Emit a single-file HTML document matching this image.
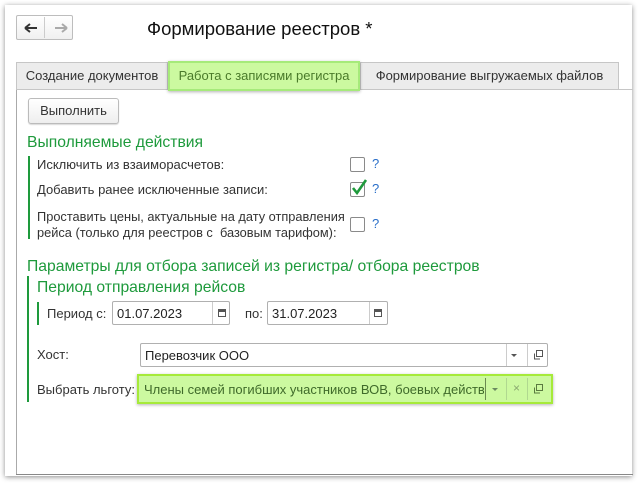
<!DOCTYPE html>
<html><head><meta charset="utf-8"><style>
*{box-sizing:border-box;margin:0;padding:0}
body{width:639px;height:483px;background:#fff;position:relative;overflow:hidden;font-family:"Liberation Sans","Noto Sans CJK SC",sans-serif;font-size:13px;color:#333}
.a{position:absolute;white-space:nowrap}
.win{left:5px;top:5px;width:627px;height:471px;background:#fff;box-shadow:0 1px 5px rgba(0,0,0,.45)}
.g{color:#1e9a3c;font-size:15.7px}
.bar{background:#1e9a3c;width:2px}
.cb{width:15px;height:15px;border:1px solid #8a8a8a;border-radius:2px;background:#fff}
.q{color:#2a6fc9;font-size:13px}
.inp{border:1px solid #b0b0b0;border-radius:2px;background:#fff;height:24px}
.tab{top:62px;height:28px;border:1px solid #c6c6c6;background:#ececec;line-height:26px;text-align:center;font-size:13px}
</style></head><body>
<div class="a win"></div>
<div class="a" style="left:16px;top:15px;width:57px;height:25px;border:1px solid #bdbdbd;border-radius:2px;background:linear-gradient(#fff,#f0f0f0)"></div>
<svg class="a" style="left:0;top:0" width="80" height="45"><path d="M25 28h12M25 28l5-4M25 28l5 4" stroke="#333" stroke-width="2" fill="none"/><path d="M55 28h12M67 28l-5-4M67 28l-5 4" stroke="#aaa" stroke-width="2" fill="none"/><line x1="44.5" y1="17" x2="44.5" y2="38" stroke="#ccc"/></svg>
<div class="a" style="left:147px;top:18px;font-size:18.5px;color:#111">Формирование реестров *</div>
<div class="a" style="left:16px;top:89px;width:617px;height:1px;background:#c6c6c6"></div>
<div class="a" style="left:16px;top:89px;width:1px;height:386px;background:#aaa"></div>
<div class="a" style="left:16px;top:474px;width:617px;height:1px;background:#888"></div>
<div class="a tab" style="left:16px;width:152px">Создание документов</div>
<div class="a tab" style="left:360px;width:259px">Формирование выгружаемых файлов</div>
<div class="a tab" style="left:168px;top:61px;width:192px;height:30px;background:#ccf9a0;border:2px solid #a6ea7a;color:#4a7a2a;line-height:26px;box-shadow:0 1px 3px rgba(0,0,0,.3)">Работа с записями регистра</div>
<div class="a" style="left:28px;top:98px;width:91px;height:26px;border:1px solid #bbb;border-radius:3px;background:linear-gradient(#fff,#eee);text-align:center;line-height:24px;box-shadow:0 1px 1px rgba(0,0,0,.15)">Выполнить</div>
<div class="a g" style="left:27px;top:134px">Выполняемые действия</div>
<div class="a bar" style="left:28px;top:156px;height:83px"></div>
<div class="a" style="left:37px;top:157px">Исключить из взаиморасчетов:</div>
<div class="a cb" style="left:350px;top:157px"></div><div class="a q" style="left:372px;top:156px">?</div>
<div class="a" style="left:37px;top:182px">Добавить ранее исключенные записи:</div>
<div class="a cb" style="left:350px;top:182px"></div><div class="a q" style="left:372px;top:181px">?</div>
<svg class="a" style="left:350px;top:178px" width="18" height="20"><path d="M3 10l4 5 9-13" stroke="#1e9a3c" stroke-width="2.6" fill="none"/></svg>
<div class="a" style="left:37px;top:209px;line-height:16px;font-size:12.8px">Проставить цены, актуальные на дату отправления<br>рейса (только для реестров с&nbsp; базовым тарифом):</div>
<div class="a cb" style="left:350px;top:217px"></div><div class="a q" style="left:372px;top:216px">?</div>
<div class="a g" style="left:27px;top:258px">Параметры для отбора записей из регистра/ отбора реестров</div>
<div class="a bar" style="left:27px;top:276px;height:126px"></div>
<div class="a g" style="left:37px;top:279px">Период отправления рейсов</div>
<div class="a bar" style="left:37px;top:302px;height:23px"></div>
<div class="a" style="left:47px;top:306px">Период с:</div>
<div class="a inp" style="left:112px;top:301px;width:118px"></div>
<div class="a" style="left:117px;top:306px;color:#222">01.07.2023</div>
<div class="a" style="left:212px;top:302px;width:1px;height:22px;background:#ccc"></div>
<div class="a" style="left:245px;top:306px">по:</div>
<div class="a inp" style="left:267px;top:301px;width:121px"></div>
<div class="a" style="left:272px;top:306px;color:#222">31.07.2023</div>
<div class="a" style="left:369px;top:302px;width:1px;height:22px;background:#ccc"></div>
<svg class="a" style="left:0;top:0" width="400" height="330"><g fill="none" stroke="#555"><rect x="218.5" y="309.5" width="7" height="7"/><rect x="374.5" y="309.5" width="7" height="7"/></g><path d="M218 311h8M374 311h8" stroke="#555" stroke-width="2"/></svg>
<div class="a" style="left:37px;top:347px">Хост:</div>
<div class="a inp" style="left:140px;top:343px;width:408px"></div>
<div class="a" style="left:145px;top:348px;color:#222">Перевозчик ООО</div>
<div class="a" style="left:506px;top:344px;width:1px;height:22px;background:#ccc"></div>
<div class="a" style="left:527px;top:344px;width:1px;height:22px;background:#ccc"></div>
<div class="a" style="left:37px;top:382px">Выбрать льготу:</div>
<div class="a" style="left:137px;top:374px;width:416px;height:30px;background:#ccf9a0;border:2px solid #a6ea3a;box-shadow:0 1px 3px rgba(0,0,0,.3)"></div>
<div class="a" style="left:144px;top:382px;color:#3f6a2a;width:340px;overflow:hidden">Члены семей погибших участников ВОВ, боевых действий</div>
<div class="a" style="left:485px;top:378px;width:1px;height:22px;background:#6a8a50"></div>
<div class="a" style="left:506px;top:378px;width:1px;height:22px;background:#b0d890"></div>
<div class="a" style="left:527px;top:378px;width:1px;height:22px;background:#b0d890"></div>
<div class="a" style="left:513px;top:381px;color:#8aa870;font-size:12px">×</div>
<svg class="a" style="left:0;top:0" width="560" height="410"><path d="M511 354l3 3 3-3z" fill="#555"/><path d="M492 388l3 3 3-3z" fill="#6a8a60"/><g fill="none" stroke="#555"><rect x="536.5" y="350.5" width="6" height="6"/><path d="M534.5 353.5v5.5h5.5"/></g><g fill="none" stroke="#5a7a40"><rect x="536.5" y="384.5" width="6" height="6"/><path d="M534.5 387.5v5.5h5.5"/></g></svg>
</body></html>
